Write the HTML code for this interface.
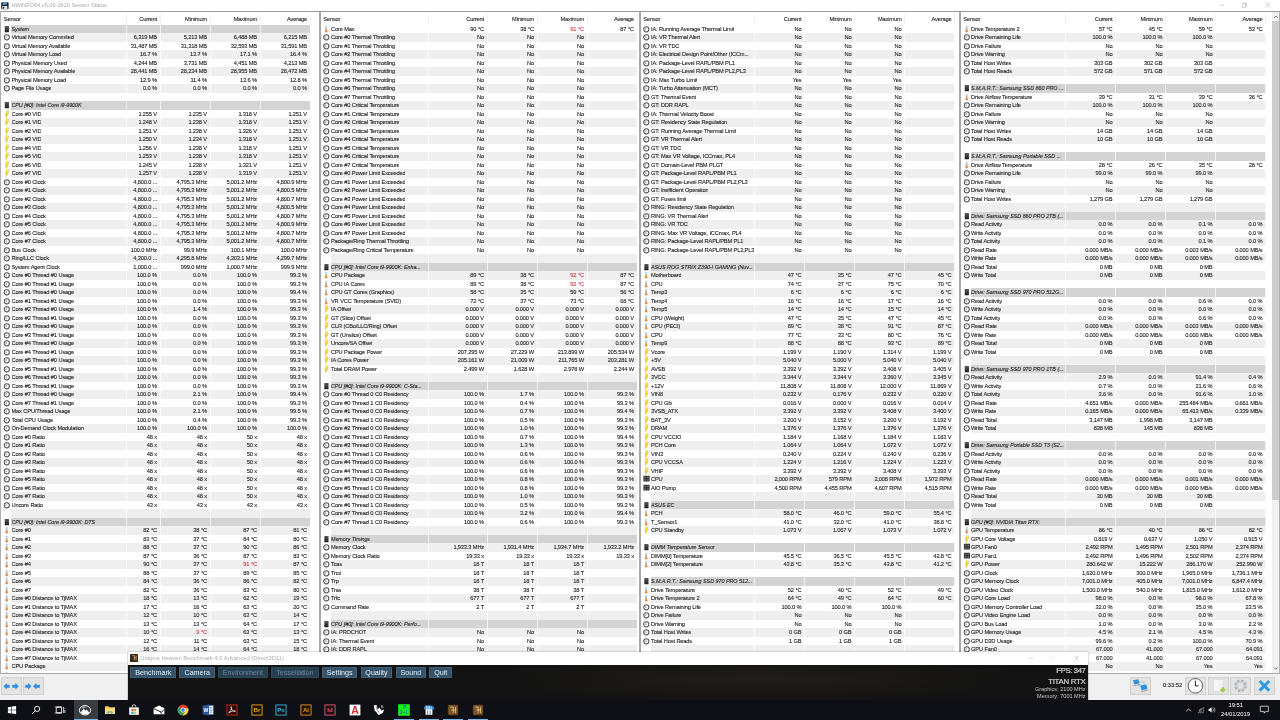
<!DOCTYPE html><html><head><meta charset="utf-8"><title>HWiNFO64 v6.00-3620 Sensor Status</title><style>
html,body{margin:0;padding:0}
body{width:1280px;height:720px;overflow:hidden;position:relative;background:#fff;font-family:"Liberation Sans",sans-serif;font-size:5.7px;color:#222}
div,span,svg{position:absolute}
.p{will-change:transform;letter-spacing:-.17px;word-spacing:.2px;-webkit-text-stroke:.1px;top:12px;height:661px;overflow:hidden;background:#fff}
.hd{top:0;left:0;height:12.5px;line-height:14.3px;width:100%}
.hd span{top:0}
.rows{top:12.5px;left:11px}
.r{position:relative;display:block;height:8.5px;line-height:8.5px;white-space:nowrap}
.e{background:#efefef}
.h{background:#d4d4d4;font-style:italic;letter-spacing:-.08px;font-size:5.42px}
.l{left:.5px;top:0;overflow:hidden}
.v{top:0;text-align:right}
.a{right:153px}.b{right:103px}.c{right:53px}.d{right:3px}
.x{color:#d63a45}
.q0 use,.q3 use{transform:translateX(.45px)}
.i{left:-7.9px;top:0;width:7px;height:8.5px}
.s{top:12.5px;width:1px;height:700px;background:rgba(255,255,255,.7)}
.sh{top:1px;width:1px;height:11px;background:#f1f1f1}
.vd{top:11px;width:2px;height:662px;background:#a8a8a8}
.q0 .l{max-width:113.8px}
.q1 .l{max-width:96.4px}
.q2 .l{max-width:102.8px}
.q3 .l{max-width:93.8px}
.tb,.bar,.hv,.tk{will-change:transform}
.tb{left:0;top:0;width:1280px;height:11px;background:#fff}
.tt{left:11.5px;top:0;line-height:11.5px;font-size:5.63px;color:#aaa;white-space:nowrap;-webkit-text-stroke:0}
.ln{background:#9c9c9c}
.bar{left:0;top:674px;width:1280px;height:26px;background:#f0f0f0}
.btn{top:3px;height:17.5px;background:#e3e3e3;border:.5px solid #d0d0d0;box-sizing:border-box}
.hv{left:127.5px;top:651.5px;width:960px;height:48.5px;background:#131313;overflow:hidden;box-shadow:0 0 2px rgba(0,0,0,.35)}
.hvt{left:0;top:0;width:100%;height:12.5px;background:#fff}
.hvt span{left:12.2px;top:0;line-height:12.5px;font-size:5.84px;color:#adadad;white-space:nowrap}
.hb{top:14.7px;height:11px;line-height:12.2px;font-size:7.15px;color:#e8eef2;text-align:center;background:#34536a;border-radius:1px;box-shadow:inset 0 0 0 .6px #4a6c84;white-space:nowrap}
.hb.dim{color:#6f8798;background:#263f50;box-shadow:inset 0 0 0 .6px #33505f}
.fps{right:2.5px;color:#d8d8d8;white-space:nowrap;text-align:right}
.tk{left:0;top:700px;width:1280px;height:20px;background:#0e1015}
.ti{top:3.5px;width:12px;height:12px}
.ul{top:19px;height:1px;width:20px;background:#76b9ed}
.tx{color:#fff;white-space:nowrap;font-size:5.8px}
.b2{-webkit-text-stroke:.2px #d8d8d8}
.x{-webkit-text-stroke-color:#d63a45}
</style></head><body>
<svg width="0" height="0" style="position:absolute"><defs>
<linearGradient id="gh" x1="0" y1="0" x2="0" y2="1"><stop offset="0" stop-color="#5a5a5a"/><stop offset="1" stop-color="#1e1e1e"/></linearGradient>
<symbol id="C" viewBox="0 0 7 8.5"><circle cx="3.3" cy="4.3" r="2.6" fill="#fff" stroke="#505050" stroke-width="1.05"/><path d="M1.9 4.1H3.6" stroke="#505050" stroke-width=".7"/></symbol>
<symbol id="H" viewBox="0 0 7 8.5"><rect x="1.3" y="1" width="4.2" height="6.3" rx=".4" fill="url(#gh)"/></symbol>
<linearGradient id="gb" x1="0" y1="0" x2="0" y2="1"><stop offset="0" stop-color="#fdf08a"/><stop offset=".55" stop-color="#fad21e"/><stop offset="1" stop-color="#f0961e"/></linearGradient><symbol id="B" viewBox="0 0 7 8.5"><path d="M2.7.7H5.1Q5.9 3.4 2.3 7.7Q3.6 4.6 1.9 4.4Z" fill="url(#gb)" stroke="#d9a028" stroke-width=".35"/></symbol>
<symbol id="T" viewBox="0 0 7 8.5"><rect x="2.3" y=".7" width="1.8" height="4" rx=".9" fill="#a9d2f2"/><rect x="2.3" y="3.6" width="1.8" height="2" fill="#f09a4a"/><circle cx="3.2" cy="6.35" r="1.25" fill="#ee8a34"/></symbol>
<symbol id="F" viewBox="0 0 7 8.5"><rect x=".4" y=".8" width="6.2" height="5.8" rx=".3" fill="#2e2e2e"/><path d="M1.3 1.6H3V3.2H1.3ZM4 1.6H5.7V3.2H4ZM1.3 4.2H3V5.8H1.3ZM4 4.2H5.7V5.8H4Z" fill="#6e6e6e"/></symbol>
</defs></svg>
<div class="p" style="left:0px;width:321px">
<div class="hd">
<span style="left:3.8px">Sensor</span>
<span style="right:164.0px">Current</span>
<span style="right:114.0px">Minimum</span>
<span style="right:64.0px">Maximum</span>
<span style="right:14.0px">Average</span>
</div>
<div class="rows q0" style="left:11.0px;width:299.0px">
<div class="r h"><svg class="i"><use href="#H"/></svg><span class="l">System</span></div>
<div class="r e"><svg class="i"><use href="#C"/></svg><span class="l">Virtual Memory Commited</span><span class="v a">6,319 MB</span><span class="v b">5,213 MB</span><span class="v c">6,488 MB</span><span class="v d">6,215 MB</span></div>
<div class="r"><svg class="i"><use href="#C"/></svg><span class="l">Virtual Memory Available</span><span class="v a">31,487 MB</span><span class="v b">31,318 MB</span><span class="v c">32,593 MB</span><span class="v d">31,591 MB</span></div>
<div class="r e"><svg class="i"><use href="#C"/></svg><span class="l">Virtual Memory Load</span><span class="v a">16.7 %</span><span class="v b">13.7 %</span><span class="v c">17.1 %</span><span class="v d">16.4 %</span></div>
<div class="r"><svg class="i"><use href="#C"/></svg><span class="l">Physical Memory Used</span><span class="v a">4,244 MB</span><span class="v b">3,731 MB</span><span class="v c">4,451 MB</span><span class="v d">4,213 MB</span></div>
<div class="r e"><svg class="i"><use href="#C"/></svg><span class="l">Physical Memory Available</span><span class="v a">28,441 MB</span><span class="v b">28,234 MB</span><span class="v c">28,955 MB</span><span class="v d">28,472 MB</span></div>
<div class="r"><svg class="i"><use href="#C"/></svg><span class="l">Physical Memory Load</span><span class="v a">12.9 %</span><span class="v b">11.4 %</span><span class="v c">13.6 %</span><span class="v d">12.8 %</span></div>
<div class="r e"><svg class="i"><use href="#C"/></svg><span class="l">Page File Usage</span><span class="v a">0.0 %</span><span class="v b">0.0 %</span><span class="v c">0.0 %</span><span class="v d">0.0 %</span></div>
<div class="r"></div>
<div class="r h"><svg class="i"><use href="#H"/></svg><span class="l">CPU [#0]: Intel Core i9-9900K</span></div>
<div class="r"><svg class="i"><use href="#B"/></svg><span class="l">Core #0 VID</span><span class="v a">1.255 V</span><span class="v b">1.235 V</span><span class="v c">1.318 V</span><span class="v d">1.251 V</span></div>
<div class="r e"><svg class="i"><use href="#B"/></svg><span class="l">Core #1 VID</span><span class="v a">1.248 V</span><span class="v b">1.238 V</span><span class="v c">1.318 V</span><span class="v d">1.251 V</span></div>
<div class="r"><svg class="i"><use href="#B"/></svg><span class="l">Core #2 VID</span><span class="v a">1.251 V</span><span class="v b">1.238 V</span><span class="v c">1.326 V</span><span class="v d">1.251 V</span></div>
<div class="r e"><svg class="i"><use href="#B"/></svg><span class="l">Core #3 VID</span><span class="v a">1.250 V</span><span class="v b">1.234 V</span><span class="v c">1.318 V</span><span class="v d">1.251 V</span></div>
<div class="r"><svg class="i"><use href="#B"/></svg><span class="l">Core #4 VID</span><span class="v a">1.256 V</span><span class="v b">1.238 V</span><span class="v c">1.318 V</span><span class="v d">1.251 V</span></div>
<div class="r e"><svg class="i"><use href="#B"/></svg><span class="l">Core #5 VID</span><span class="v a">1.253 V</span><span class="v b">1.238 V</span><span class="v c">1.318 V</span><span class="v d">1.251 V</span></div>
<div class="r"><svg class="i"><use href="#B"/></svg><span class="l">Core #6 VID</span><span class="v a">1.245 V</span><span class="v b">1.238 V</span><span class="v c">1.321 V</span><span class="v d">1.251 V</span></div>
<div class="r e"><svg class="i"><use href="#B"/></svg><span class="l">Core #7 VID</span><span class="v a">1.257 V</span><span class="v b">1.238 V</span><span class="v c">1.319 V</span><span class="v d">1.251 V</span></div>
<div class="r"><svg class="i"><use href="#C"/></svg><span class="l">Core #0 Clock</span><span class="v a">4,800.0 ...</span><span class="v b">4,795.3 MHz</span><span class="v c">5,001.2 MHz</span><span class="v d">4,800.9 MHz</span></div>
<div class="r e"><svg class="i"><use href="#C"/></svg><span class="l">Core #1 Clock</span><span class="v a">4,800.0 ...</span><span class="v b">4,795.3 MHz</span><span class="v c">5,001.2 MHz</span><span class="v d">4,800.5 MHz</span></div>
<div class="r"><svg class="i"><use href="#C"/></svg><span class="l">Core #2 Clock</span><span class="v a">4,800.0 ...</span><span class="v b">4,795.3 MHz</span><span class="v c">5,001.2 MHz</span><span class="v d">4,800.7 MHz</span></div>
<div class="r e"><svg class="i"><use href="#C"/></svg><span class="l">Core #3 Clock</span><span class="v a">4,800.0 ...</span><span class="v b">4,795.3 MHz</span><span class="v c">5,001.2 MHz</span><span class="v d">4,800.5 MHz</span></div>
<div class="r"><svg class="i"><use href="#C"/></svg><span class="l">Core #4 Clock</span><span class="v a">4,800.0 ...</span><span class="v b">4,795.3 MHz</span><span class="v c">5,001.2 MHz</span><span class="v d">4,800.7 MHz</span></div>
<div class="r e"><svg class="i"><use href="#C"/></svg><span class="l">Core #5 Clock</span><span class="v a">4,800.0 ...</span><span class="v b">4,795.3 MHz</span><span class="v c">5,001.2 MHz</span><span class="v d">4,800.9 MHz</span></div>
<div class="r"><svg class="i"><use href="#C"/></svg><span class="l">Core #6 Clock</span><span class="v a">4,800.0 ...</span><span class="v b">4,795.3 MHz</span><span class="v c">5,001.2 MHz</span><span class="v d">4,800.7 MHz</span></div>
<div class="r e"><svg class="i"><use href="#C"/></svg><span class="l">Core #7 Clock</span><span class="v a">4,800.0 ...</span><span class="v b">4,795.3 MHz</span><span class="v c">5,001.2 MHz</span><span class="v d">4,800.7 MHz</span></div>
<div class="r"><svg class="i"><use href="#C"/></svg><span class="l">Bus Clock</span><span class="v a">100.0 MHz</span><span class="v b">99.9 MHz</span><span class="v c">100.1 MHz</span><span class="v d">100.0 MHz</span></div>
<div class="r e"><svg class="i"><use href="#C"/></svg><span class="l">Ring/LLC Clock</span><span class="v a">4,300.0 ...</span><span class="v b">4,295.8 MHz</span><span class="v c">4,303.1 MHz</span><span class="v d">4,299.7 MHz</span></div>
<div class="r"><svg class="i"><use href="#C"/></svg><span class="l">System Agent Clock</span><span class="v a">1,000.0 ...</span><span class="v b">999.0 MHz</span><span class="v c">1,000.7 MHz</span><span class="v d">999.9 MHz</span></div>
<div class="r e"><svg class="i"><use href="#C"/></svg><span class="l">Core #0 Thread #0 Usage</span><span class="v a">100.0 %</span><span class="v b">0.0 %</span><span class="v c">100.0 %</span><span class="v d">99.3 %</span></div>
<div class="r"><svg class="i"><use href="#C"/></svg><span class="l">Core #0 Thread #1 Usage</span><span class="v a">100.0 %</span><span class="v b">0.0 %</span><span class="v c">100.0 %</span><span class="v d">99.3 %</span></div>
<div class="r e"><svg class="i"><use href="#C"/></svg><span class="l">Core #1 Thread #0 Usage</span><span class="v a">100.0 %</span><span class="v b">0.0 %</span><span class="v c">100.0 %</span><span class="v d">99.4 %</span></div>
<div class="r"><svg class="i"><use href="#C"/></svg><span class="l">Core #1 Thread #1 Usage</span><span class="v a">100.0 %</span><span class="v b">0.0 %</span><span class="v c">100.0 %</span><span class="v d">99.3 %</span></div>
<div class="r e"><svg class="i"><use href="#C"/></svg><span class="l">Core #2 Thread #0 Usage</span><span class="v a">100.0 %</span><span class="v b">1.4 %</span><span class="v c">100.0 %</span><span class="v d">99.3 %</span></div>
<div class="r"><svg class="i"><use href="#C"/></svg><span class="l">Core #2 Thread #1 Usage</span><span class="v a">100.0 %</span><span class="v b">0.0 %</span><span class="v c">100.0 %</span><span class="v d">99.3 %</span></div>
<div class="r e"><svg class="i"><use href="#C"/></svg><span class="l">Core #3 Thread #0 Usage</span><span class="v a">100.0 %</span><span class="v b">0.0 %</span><span class="v c">100.0 %</span><span class="v d">99.3 %</span></div>
<div class="r"><svg class="i"><use href="#C"/></svg><span class="l">Core #3 Thread #1 Usage</span><span class="v a">100.0 %</span><span class="v b">0.0 %</span><span class="v c">100.0 %</span><span class="v d">99.3 %</span></div>
<div class="r e"><svg class="i"><use href="#C"/></svg><span class="l">Core #4 Thread #0 Usage</span><span class="v a">100.0 %</span><span class="v b">0.0 %</span><span class="v c">100.0 %</span><span class="v d">99.3 %</span></div>
<div class="r"><svg class="i"><use href="#C"/></svg><span class="l">Core #4 Thread #1 Usage</span><span class="v a">100.0 %</span><span class="v b">0.0 %</span><span class="v c">100.0 %</span><span class="v d">99.3 %</span></div>
<div class="r e"><svg class="i"><use href="#C"/></svg><span class="l">Core #5 Thread #0 Usage</span><span class="v a">100.0 %</span><span class="v b">0.0 %</span><span class="v c">100.0 %</span><span class="v d">99.3 %</span></div>
<div class="r"><svg class="i"><use href="#C"/></svg><span class="l">Core #5 Thread #1 Usage</span><span class="v a">100.0 %</span><span class="v b">0.0 %</span><span class="v c">100.0 %</span><span class="v d">99.3 %</span></div>
<div class="r e"><svg class="i"><use href="#C"/></svg><span class="l">Core #6 Thread #0 Usage</span><span class="v a">100.0 %</span><span class="v b">0.0 %</span><span class="v c">100.0 %</span><span class="v d">99.3 %</span></div>
<div class="r"><svg class="i"><use href="#C"/></svg><span class="l">Core #6 Thread #1 Usage</span><span class="v a">100.0 %</span><span class="v b">0.0 %</span><span class="v c">100.0 %</span><span class="v d">99.3 %</span></div>
<div class="r e"><svg class="i"><use href="#C"/></svg><span class="l">Core #7 Thread #0 Usage</span><span class="v a">100.0 %</span><span class="v b">2.1 %</span><span class="v c">100.0 %</span><span class="v d">99.4 %</span></div>
<div class="r"><svg class="i"><use href="#C"/></svg><span class="l">Core #7 Thread #1 Usage</span><span class="v a">100.0 %</span><span class="v b">0.0 %</span><span class="v c">100.0 %</span><span class="v d">99.3 %</span></div>
<div class="r e"><svg class="i"><use href="#C"/></svg><span class="l">Max CPU/Thread Usage</span><span class="v a">100.0 %</span><span class="v b">2.1 %</span><span class="v c">100.0 %</span><span class="v d">99.5 %</span></div>
<div class="r"><svg class="i"><use href="#C"/></svg><span class="l">Total CPU Usage</span><span class="v a">100.0 %</span><span class="v b">0.4 %</span><span class="v c">100.0 %</span><span class="v d">99.3 %</span></div>
<div class="r e"><svg class="i"><use href="#C"/></svg><span class="l">On-Demand Clock Modulation</span><span class="v a">100.0 %</span><span class="v b">100.0 %</span><span class="v c">100.0 %</span><span class="v d">100.0 %</span></div>
<div class="r"><svg class="i"><use href="#C"/></svg><span class="l">Core #0 Ratio</span><span class="v a">48 x</span><span class="v b">48 x</span><span class="v c">50 x</span><span class="v d">48 x</span></div>
<div class="r e"><svg class="i"><use href="#C"/></svg><span class="l">Core #1 Ratio</span><span class="v a">48 x</span><span class="v b">48 x</span><span class="v c">50 x</span><span class="v d">48 x</span></div>
<div class="r"><svg class="i"><use href="#C"/></svg><span class="l">Core #2 Ratio</span><span class="v a">48 x</span><span class="v b">48 x</span><span class="v c">50 x</span><span class="v d">48 x</span></div>
<div class="r e"><svg class="i"><use href="#C"/></svg><span class="l">Core #3 Ratio</span><span class="v a">48 x</span><span class="v b">48 x</span><span class="v c">50 x</span><span class="v d">48 x</span></div>
<div class="r"><svg class="i"><use href="#C"/></svg><span class="l">Core #4 Ratio</span><span class="v a">48 x</span><span class="v b">48 x</span><span class="v c">50 x</span><span class="v d">48 x</span></div>
<div class="r e"><svg class="i"><use href="#C"/></svg><span class="l">Core #5 Ratio</span><span class="v a">48 x</span><span class="v b">48 x</span><span class="v c">50 x</span><span class="v d">48 x</span></div>
<div class="r"><svg class="i"><use href="#C"/></svg><span class="l">Core #6 Ratio</span><span class="v a">48 x</span><span class="v b">48 x</span><span class="v c">50 x</span><span class="v d">48 x</span></div>
<div class="r e"><svg class="i"><use href="#C"/></svg><span class="l">Core #7 Ratio</span><span class="v a">48 x</span><span class="v b">48 x</span><span class="v c">50 x</span><span class="v d">48 x</span></div>
<div class="r"><svg class="i"><use href="#C"/></svg><span class="l">Uncore Ratio</span><span class="v a">43 x</span><span class="v b">43 x</span><span class="v c">43 x</span><span class="v d">43 x</span></div>
<div class="r e"></div>
<div class="r h"><svg class="i"><use href="#H"/></svg><span class="l">CPU [#0]: Intel Core i9-9900K: DTS</span></div>
<div class="r e"><svg class="i"><use href="#T"/></svg><span class="l">Core #0</span><span class="v a">82 °C</span><span class="v b">38 °C</span><span class="v c">87 °C</span><span class="v d">81 °C</span></div>
<div class="r"><svg class="i"><use href="#T"/></svg><span class="l">Core #1</span><span class="v a">83 °C</span><span class="v b">37 °C</span><span class="v c">84 °C</span><span class="v d">80 °C</span></div>
<div class="r e"><svg class="i"><use href="#T"/></svg><span class="l">Core #2</span><span class="v a">88 °C</span><span class="v b">37 °C</span><span class="v c">90 °C</span><span class="v d">86 °C</span></div>
<div class="r"><svg class="i"><use href="#T"/></svg><span class="l">Core #3</span><span class="v a">87 °C</span><span class="v b">36 °C</span><span class="v c">87 °C</span><span class="v d">83 °C</span></div>
<div class="r e"><svg class="i"><use href="#T"/></svg><span class="l">Core #4</span><span class="v a">90 °C</span><span class="v b">37 °C</span><span class="v c x">91 °C</span><span class="v d">87 °C</span></div>
<div class="r"><svg class="i"><use href="#T"/></svg><span class="l">Core #5</span><span class="v a">88 °C</span><span class="v b">37 °C</span><span class="v c">89 °C</span><span class="v d">85 °C</span></div>
<div class="r e"><svg class="i"><use href="#T"/></svg><span class="l">Core #6</span><span class="v a">84 °C</span><span class="v b">36 °C</span><span class="v c">86 °C</span><span class="v d">82 °C</span></div>
<div class="r"><svg class="i"><use href="#T"/></svg><span class="l">Core #7</span><span class="v a">82 °C</span><span class="v b">36 °C</span><span class="v c">83 °C</span><span class="v d">80 °C</span></div>
<div class="r e"><svg class="i"><use href="#T"/></svg><span class="l">Core #0 Distance to TjMAX</span><span class="v a">18 °C</span><span class="v b">13 °C</span><span class="v c">62 °C</span><span class="v d">19 °C</span></div>
<div class="r"><svg class="i"><use href="#T"/></svg><span class="l">Core #1 Distance to TjMAX</span><span class="v a">17 °C</span><span class="v b">16 °C</span><span class="v c">63 °C</span><span class="v d">20 °C</span></div>
<div class="r e"><svg class="i"><use href="#T"/></svg><span class="l">Core #2 Distance to TjMAX</span><span class="v a">12 °C</span><span class="v b">10 °C</span><span class="v c">63 °C</span><span class="v d">14 °C</span></div>
<div class="r"><svg class="i"><use href="#T"/></svg><span class="l">Core #3 Distance to TjMAX</span><span class="v a">13 °C</span><span class="v b">13 °C</span><span class="v c">64 °C</span><span class="v d">17 °C</span></div>
<div class="r e"><svg class="i"><use href="#T"/></svg><span class="l">Core #4 Distance to TjMAX</span><span class="v a">10 °C</span><span class="v b x">9 °C</span><span class="v c">63 °C</span><span class="v d">13 °C</span></div>
<div class="r"><svg class="i"><use href="#T"/></svg><span class="l">Core #5 Distance to TjMAX</span><span class="v a">12 °C</span><span class="v b">11 °C</span><span class="v c">63 °C</span><span class="v d">15 °C</span></div>
<div class="r e"><svg class="i"><use href="#T"/></svg><span class="l">Core #6 Distance to TjMAX</span><span class="v a">16 °C</span><span class="v b">14 °C</span><span class="v c">64 °C</span><span class="v d">18 °C</span></div>
<div class="r"><svg class="i"><use href="#T"/></svg><span class="l">Core #7 Distance to TjMAX</span><span class="v a">15 °C</span><span class="v b">13 °C</span><span class="v c">63 °C</span><span class="v d">17 °C</span></div>
<div class="r e"><svg class="i"><use href="#T"/></svg><span class="l">CPU Package</span><span class="v a">89 °C</span><span class="v b">38 °C</span><span class="v c x">92 °C</span><span class="v d">87 °C</span></div>
<div class="r"><svg class="i"><use href="#T"/></svg><span class="l">Core Max</span><span class="v a">90 °C</span><span class="v b">38 °C</span><span class="v c x">91 °C</span><span class="v d">87 °C</span></div>
</div>
<div class="s" style="left:125.5px"></div><div class="sh" style="left:125.5px"></div>
<div class="s" style="left:159.5px"></div><div class="sh" style="left:159.5px"></div>
<div class="s" style="left:209.5px"></div><div class="sh" style="left:209.5px"></div>
<div class="s" style="left:259.5px"></div><div class="sh" style="left:259.5px"></div>
<div class="s" style="left:309.5px"></div><div class="sh" style="left:309.5px"></div>
</div>
<div class="p" style="left:319px;width:321px">
<div class="hd">
<span style="left:4.3px">Sensor</span>
<span style="right:156.0px">Current</span>
<span style="right:106.0px">Minimum</span>
<span style="right:56.0px">Maximum</span>
<span style="right:6.0px">Average</span>
</div>
<div class="rows q1" style="left:11.5px;width:306.5px">
<div class="r"><svg class="i"><use href="#T"/></svg><span class="l">Core Max</span><span class="v a">90 °C</span><span class="v b">38 °C</span><span class="v c x">91 °C</span><span class="v d">87 °C</span></div>
<div class="r e"><svg class="i"><use href="#C"/></svg><span class="l">Core #0 Thermal Throttling</span><span class="v a">No</span><span class="v b">No</span><span class="v c">No</span></div>
<div class="r"><svg class="i"><use href="#C"/></svg><span class="l">Core #1 Thermal Throttling</span><span class="v a">No</span><span class="v b">No</span><span class="v c">No</span></div>
<div class="r e"><svg class="i"><use href="#C"/></svg><span class="l">Core #2 Thermal Throttling</span><span class="v a">No</span><span class="v b">No</span><span class="v c">No</span></div>
<div class="r"><svg class="i"><use href="#C"/></svg><span class="l">Core #3 Thermal Throttling</span><span class="v a">No</span><span class="v b">No</span><span class="v c">No</span></div>
<div class="r e"><svg class="i"><use href="#C"/></svg><span class="l">Core #4 Thermal Throttling</span><span class="v a">No</span><span class="v b">No</span><span class="v c">No</span></div>
<div class="r"><svg class="i"><use href="#C"/></svg><span class="l">Core #5 Thermal Throttling</span><span class="v a">No</span><span class="v b">No</span><span class="v c">No</span></div>
<div class="r e"><svg class="i"><use href="#C"/></svg><span class="l">Core #6 Thermal Throttling</span><span class="v a">No</span><span class="v b">No</span><span class="v c">No</span></div>
<div class="r"><svg class="i"><use href="#C"/></svg><span class="l">Core #7 Thermal Throttling</span><span class="v a">No</span><span class="v b">No</span><span class="v c">No</span></div>
<div class="r e"><svg class="i"><use href="#C"/></svg><span class="l">Core #0 Critical Temperature</span><span class="v a">No</span><span class="v b">No</span><span class="v c">No</span></div>
<div class="r"><svg class="i"><use href="#C"/></svg><span class="l">Core #1 Critical Temperature</span><span class="v a">No</span><span class="v b">No</span><span class="v c">No</span></div>
<div class="r e"><svg class="i"><use href="#C"/></svg><span class="l">Core #2 Critical Temperature</span><span class="v a">No</span><span class="v b">No</span><span class="v c">No</span></div>
<div class="r"><svg class="i"><use href="#C"/></svg><span class="l">Core #3 Critical Temperature</span><span class="v a">No</span><span class="v b">No</span><span class="v c">No</span></div>
<div class="r e"><svg class="i"><use href="#C"/></svg><span class="l">Core #4 Critical Temperature</span><span class="v a">No</span><span class="v b">No</span><span class="v c">No</span></div>
<div class="r"><svg class="i"><use href="#C"/></svg><span class="l">Core #5 Critical Temperature</span><span class="v a">No</span><span class="v b">No</span><span class="v c">No</span></div>
<div class="r e"><svg class="i"><use href="#C"/></svg><span class="l">Core #6 Critical Temperature</span><span class="v a">No</span><span class="v b">No</span><span class="v c">No</span></div>
<div class="r"><svg class="i"><use href="#C"/></svg><span class="l">Core #7 Critical Temperature</span><span class="v a">No</span><span class="v b">No</span><span class="v c">No</span></div>
<div class="r e"><svg class="i"><use href="#C"/></svg><span class="l">Core #0 Power Limit Exceeded</span><span class="v a">No</span><span class="v b">No</span><span class="v c">No</span></div>
<div class="r"><svg class="i"><use href="#C"/></svg><span class="l">Core #1 Power Limit Exceeded</span><span class="v a">No</span><span class="v b">No</span><span class="v c">No</span></div>
<div class="r e"><svg class="i"><use href="#C"/></svg><span class="l">Core #2 Power Limit Exceeded</span><span class="v a">No</span><span class="v b">No</span><span class="v c">No</span></div>
<div class="r"><svg class="i"><use href="#C"/></svg><span class="l">Core #3 Power Limit Exceeded</span><span class="v a">No</span><span class="v b">No</span><span class="v c">No</span></div>
<div class="r e"><svg class="i"><use href="#C"/></svg><span class="l">Core #4 Power Limit Exceeded</span><span class="v a">No</span><span class="v b">No</span><span class="v c">No</span></div>
<div class="r"><svg class="i"><use href="#C"/></svg><span class="l">Core #5 Power Limit Exceeded</span><span class="v a">No</span><span class="v b">No</span><span class="v c">No</span></div>
<div class="r e"><svg class="i"><use href="#C"/></svg><span class="l">Core #6 Power Limit Exceeded</span><span class="v a">No</span><span class="v b">No</span><span class="v c">No</span></div>
<div class="r"><svg class="i"><use href="#C"/></svg><span class="l">Core #7 Power Limit Exceeded</span><span class="v a">No</span><span class="v b">No</span><span class="v c">No</span></div>
<div class="r e"><svg class="i"><use href="#C"/></svg><span class="l">Package/Ring Thermal Throttling</span><span class="v a">No</span><span class="v b">No</span><span class="v c">No</span></div>
<div class="r"><svg class="i"><use href="#C"/></svg><span class="l">Package/Ring Critical Temperature</span><span class="v a">No</span><span class="v b">No</span><span class="v c">No</span></div>
<div class="r e"></div>
<div class="r h"><svg class="i"><use href="#H"/></svg><span class="l">CPU [#0]: Intel Core i9-9900K: Enha...</span></div>
<div class="r e"><svg class="i"><use href="#T"/></svg><span class="l">CPU Package</span><span class="v a">89 °C</span><span class="v b">38 °C</span><span class="v c x">92 °C</span><span class="v d">87 °C</span></div>
<div class="r"><svg class="i"><use href="#T"/></svg><span class="l">CPU IA Cores</span><span class="v a">89 °C</span><span class="v b">38 °C</span><span class="v c x">92 °C</span><span class="v d">87 °C</span></div>
<div class="r e"><svg class="i"><use href="#T"/></svg><span class="l">CPU GT Cores (Graphics)</span><span class="v a">58 °C</span><span class="v b">35 °C</span><span class="v c">59 °C</span><span class="v d">56 °C</span></div>
<div class="r"><svg class="i"><use href="#T"/></svg><span class="l">VR VCC Temperature (SVID)</span><span class="v a">72 °C</span><span class="v b">37 °C</span><span class="v c">73 °C</span><span class="v d">68 °C</span></div>
<div class="r e"><svg class="i"><use href="#B"/></svg><span class="l">IA Offset</span><span class="v a">0.000 V</span><span class="v b">0.000 V</span><span class="v c">0.000 V</span><span class="v d">0.000 V</span></div>
<div class="r"><svg class="i"><use href="#B"/></svg><span class="l">GT (Slice) Offset</span><span class="v a">0.000 V</span><span class="v b">0.000 V</span><span class="v c">0.000 V</span><span class="v d">0.000 V</span></div>
<div class="r e"><svg class="i"><use href="#B"/></svg><span class="l">CLR (CBo/LLC/Ring) Offset</span><span class="v a">0.000 V</span><span class="v b">0.000 V</span><span class="v c">0.000 V</span><span class="v d">0.000 V</span></div>
<div class="r"><svg class="i"><use href="#B"/></svg><span class="l">GT (Unslice) Offset</span><span class="v a">0.000 V</span><span class="v b">0.000 V</span><span class="v c">0.000 V</span><span class="v d">0.000 V</span></div>
<div class="r e"><svg class="i"><use href="#B"/></svg><span class="l">Uncore/SA Offset</span><span class="v a">0.000 V</span><span class="v b">0.000 V</span><span class="v c">0.000 V</span><span class="v d">0.000 V</span></div>
<div class="r"><svg class="i"><use href="#B"/></svg><span class="l">CPU Package Power</span><span class="v a">207.295 W</span><span class="v b">27.229 W</span><span class="v c">213.899 W</span><span class="v d">205.534 W</span></div>
<div class="r e"><svg class="i"><use href="#B"/></svg><span class="l">IA Cores Power</span><span class="v a">205.161 W</span><span class="v b">21.009 W</span><span class="v c">211.765 W</span><span class="v d">203.281 W</span></div>
<div class="r"><svg class="i"><use href="#B"/></svg><span class="l">Total DRAM Power</span><span class="v a">2.499 W</span><span class="v b">1.628 W</span><span class="v c">2.978 W</span><span class="v d">2.244 W</span></div>
<div class="r e"></div>
<div class="r h"><svg class="i"><use href="#H"/></svg><span class="l">CPU [#0]: Intel Core i9-9900K: C-Sta...</span></div>
<div class="r e"><svg class="i"><use href="#C"/></svg><span class="l">Core #0 Thread 0 C0 Residency</span><span class="v a">100.0 %</span><span class="v b">1.7 %</span><span class="v c">100.0 %</span><span class="v d">99.3 %</span></div>
<div class="r"><svg class="i"><use href="#C"/></svg><span class="l">Core #0 Thread 1 C0 Residency</span><span class="v a">100.0 %</span><span class="v b">0.4 %</span><span class="v c">100.0 %</span><span class="v d">99.3 %</span></div>
<div class="r e"><svg class="i"><use href="#C"/></svg><span class="l">Core #1 Thread 0 C0 Residency</span><span class="v a">100.0 %</span><span class="v b">0.7 %</span><span class="v c">100.0 %</span><span class="v d">99.4 %</span></div>
<div class="r"><svg class="i"><use href="#C"/></svg><span class="l">Core #1 Thread 1 C0 Residency</span><span class="v a">100.0 %</span><span class="v b">0.5 %</span><span class="v c">100.0 %</span><span class="v d">99.3 %</span></div>
<div class="r e"><svg class="i"><use href="#C"/></svg><span class="l">Core #2 Thread 0 C0 Residency</span><span class="v a">100.0 %</span><span class="v b">1.0 %</span><span class="v c">100.0 %</span><span class="v d">99.3 %</span></div>
<div class="r"><svg class="i"><use href="#C"/></svg><span class="l">Core #2 Thread 1 C0 Residency</span><span class="v a">100.0 %</span><span class="v b">0.7 %</span><span class="v c">100.0 %</span><span class="v d">99.4 %</span></div>
<div class="r e"><svg class="i"><use href="#C"/></svg><span class="l">Core #3 Thread 0 C0 Residency</span><span class="v a">100.0 %</span><span class="v b">1.3 %</span><span class="v c">100.0 %</span><span class="v d">99.3 %</span></div>
<div class="r"><svg class="i"><use href="#C"/></svg><span class="l">Core #3 Thread 1 C0 Residency</span><span class="v a">100.0 %</span><span class="v b">0.6 %</span><span class="v c">100.0 %</span><span class="v d">99.3 %</span></div>
<div class="r e"><svg class="i"><use href="#C"/></svg><span class="l">Core #4 Thread 0 C0 Residency</span><span class="v a">100.0 %</span><span class="v b">0.6 %</span><span class="v c">100.0 %</span><span class="v d">99.3 %</span></div>
<div class="r"><svg class="i"><use href="#C"/></svg><span class="l">Core #4 Thread 1 C0 Residency</span><span class="v a">100.0 %</span><span class="v b">0.6 %</span><span class="v c">100.0 %</span><span class="v d">99.3 %</span></div>
<div class="r e"><svg class="i"><use href="#C"/></svg><span class="l">Core #5 Thread 0 C0 Residency</span><span class="v a">100.0 %</span><span class="v b">0.8 %</span><span class="v c">100.0 %</span><span class="v d">99.3 %</span></div>
<div class="r"><svg class="i"><use href="#C"/></svg><span class="l">Core #5 Thread 1 C0 Residency</span><span class="v a">100.0 %</span><span class="v b">0.8 %</span><span class="v c">100.0 %</span><span class="v d">99.3 %</span></div>
<div class="r e"><svg class="i"><use href="#C"/></svg><span class="l">Core #6 Thread 0 C0 Residency</span><span class="v a">100.0 %</span><span class="v b">1.0 %</span><span class="v c">100.0 %</span><span class="v d">99.3 %</span></div>
<div class="r"><svg class="i"><use href="#C"/></svg><span class="l">Core #6 Thread 1 C0 Residency</span><span class="v a">100.0 %</span><span class="v b">0.5 %</span><span class="v c">100.0 %</span><span class="v d">99.3 %</span></div>
<div class="r e"><svg class="i"><use href="#C"/></svg><span class="l">Core #7 Thread 0 C0 Residency</span><span class="v a">100.0 %</span><span class="v b">3.2 %</span><span class="v c">100.0 %</span><span class="v d">99.4 %</span></div>
<div class="r"><svg class="i"><use href="#C"/></svg><span class="l">Core #7 Thread 1 C0 Residency</span><span class="v a">100.0 %</span><span class="v b">0.6 %</span><span class="v c">100.0 %</span><span class="v d">99.3 %</span></div>
<div class="r e"></div>
<div class="r h"><svg class="i"><use href="#H"/></svg><span class="l">Memory Timings</span></div>
<div class="r e"><svg class="i"><use href="#C"/></svg><span class="l">Memory Clock</span><span class="v a">1,933.3 MHz</span><span class="v b">1,931.4 MHz</span><span class="v c">1,934.7 MHz</span><span class="v d">1,933.2 MHz</span></div>
<div class="r"><svg class="i"><use href="#C"/></svg><span class="l">Memory Clock Ratio</span><span class="v a">19.33 x</span><span class="v b">19.33 x</span><span class="v c">19.33 x</span><span class="v d">19.33 x</span></div>
<div class="r e"><svg class="i"><use href="#C"/></svg><span class="l">Tcas</span><span class="v a">18 T</span><span class="v b">18 T</span><span class="v c">18 T</span></div>
<div class="r"><svg class="i"><use href="#C"/></svg><span class="l">Trcd</span><span class="v a">18 T</span><span class="v b">18 T</span><span class="v c">18 T</span></div>
<div class="r e"><svg class="i"><use href="#C"/></svg><span class="l">Trp</span><span class="v a">18 T</span><span class="v b">18 T</span><span class="v c">18 T</span></div>
<div class="r"><svg class="i"><use href="#C"/></svg><span class="l">Tras</span><span class="v a">38 T</span><span class="v b">38 T</span><span class="v c">38 T</span></div>
<div class="r e"><svg class="i"><use href="#C"/></svg><span class="l">Trfc</span><span class="v a">677 T</span><span class="v b">677 T</span><span class="v c">677 T</span></div>
<div class="r"><svg class="i"><use href="#C"/></svg><span class="l">Command Rate</span><span class="v a">2 T</span><span class="v b">2 T</span><span class="v c">2 T</span></div>
<div class="r e"></div>
<div class="r h"><svg class="i"><use href="#H"/></svg><span class="l">CPU [#0]: Intel Core i9-9900K: Perfo...</span></div>
<div class="r e"><svg class="i"><use href="#C"/></svg><span class="l">IA: PROCHOT</span><span class="v a">No</span><span class="v b">No</span><span class="v c">No</span></div>
<div class="r"><svg class="i"><use href="#C"/></svg><span class="l">IA: Thermal Event</span><span class="v a">No</span><span class="v b">No</span><span class="v c">No</span></div>
<div class="r e"><svg class="i"><use href="#C"/></svg><span class="l">IA: DDR RAPL</span><span class="v a">No</span><span class="v b">No</span><span class="v c">No</span></div>
<div class="r"><svg class="i"><use href="#C"/></svg><span class="l">IA: Slow Slew Rate</span><span class="v a">No</span><span class="v b">No</span><span class="v c">No</span></div>
</div>
<div class="s" style="left:108.6px"></div><div class="sh" style="left:108.6px"></div>
<div class="s" style="left:167.5px"></div><div class="sh" style="left:167.5px"></div>
<div class="s" style="left:217.5px"></div><div class="sh" style="left:217.5px"></div>
<div class="s" style="left:267.5px"></div><div class="sh" style="left:267.5px"></div>
<div class="s" style="left:317.5px"></div><div class="sh" style="left:317.5px"></div>
</div>
<div class="p" style="left:639px;width:321px">
<div class="hd">
<span style="left:4.3px">Sensor</span>
<span style="right:158.5px">Current</span>
<span style="right:108.5px">Minimum</span>
<span style="right:58.5px">Maximum</span>
<span style="right:8.5px">Average</span>
</div>
<div class="rows q2" style="left:11.5px;width:304.0px">
<div class="r"><svg class="i"><use href="#C"/></svg><span class="l">IA: Running Average Thermal Limit</span><span class="v a">No</span><span class="v b">No</span><span class="v c">No</span></div>
<div class="r e"><svg class="i"><use href="#C"/></svg><span class="l">IA: VR Thermal Alert</span><span class="v a">No</span><span class="v b">No</span><span class="v c">No</span></div>
<div class="r"><svg class="i"><use href="#C"/></svg><span class="l">IA: VR TDC</span><span class="v a">No</span><span class="v b">No</span><span class="v c">No</span></div>
<div class="r e"><svg class="i"><use href="#C"/></svg><span class="l">IA: Electrical Design Point/Other (ICCm...</span><span class="v a">No</span><span class="v b">No</span><span class="v c">No</span></div>
<div class="r"><svg class="i"><use href="#C"/></svg><span class="l">IA: Package-Level RAPL/PBM PL1</span><span class="v a">No</span><span class="v b">No</span><span class="v c">No</span></div>
<div class="r e"><svg class="i"><use href="#C"/></svg><span class="l">IA: Package-Level RAPL/PBM PL2,PL3</span><span class="v a">No</span><span class="v b">No</span><span class="v c">No</span></div>
<div class="r"><svg class="i"><use href="#C"/></svg><span class="l">IA: Max Turbo Limit</span><span class="v a">Yes</span><span class="v b">Yes</span><span class="v c">Yes</span></div>
<div class="r e"><svg class="i"><use href="#C"/></svg><span class="l">IA: Turbo Attenuation (MCT)</span><span class="v a">No</span><span class="v b">No</span><span class="v c">No</span></div>
<div class="r"><svg class="i"><use href="#C"/></svg><span class="l">GT: Thermal Event</span><span class="v a">No</span><span class="v b">No</span><span class="v c">No</span></div>
<div class="r e"><svg class="i"><use href="#C"/></svg><span class="l">GT: DDR RAPL</span><span class="v a">No</span><span class="v b">No</span><span class="v c">No</span></div>
<div class="r"><svg class="i"><use href="#C"/></svg><span class="l">IA: Thermal Velocity Boost</span><span class="v a">No</span><span class="v b">No</span><span class="v c">No</span></div>
<div class="r e"><svg class="i"><use href="#C"/></svg><span class="l">GT: Residency State Regulation</span><span class="v a">No</span><span class="v b">No</span><span class="v c">No</span></div>
<div class="r"><svg class="i"><use href="#C"/></svg><span class="l">GT: Running Average Thermal Limit</span><span class="v a">No</span><span class="v b">No</span><span class="v c">No</span></div>
<div class="r e"><svg class="i"><use href="#C"/></svg><span class="l">GT: VR Thermal Alert</span><span class="v a">No</span><span class="v b">No</span><span class="v c">No</span></div>
<div class="r"><svg class="i"><use href="#C"/></svg><span class="l">GT: VR TDC</span><span class="v a">No</span><span class="v b">No</span><span class="v c">No</span></div>
<div class="r e"><svg class="i"><use href="#C"/></svg><span class="l">GT: Max VR Voltage, ICCmax, PL4</span><span class="v a">No</span><span class="v b">No</span><span class="v c">No</span></div>
<div class="r"><svg class="i"><use href="#C"/></svg><span class="l">GT: Domain-Level PBM PLGT</span><span class="v a">No</span><span class="v b">No</span><span class="v c">No</span></div>
<div class="r e"><svg class="i"><use href="#C"/></svg><span class="l">GT: Package-Level RAPL/PBM PL1</span><span class="v a">No</span><span class="v b">No</span><span class="v c">No</span></div>
<div class="r"><svg class="i"><use href="#C"/></svg><span class="l">GT: Package-Level RAPL/PBM PL2,PL3</span><span class="v a">No</span><span class="v b">No</span><span class="v c">No</span></div>
<div class="r e"><svg class="i"><use href="#C"/></svg><span class="l">GT: Inefficient Operation</span><span class="v a">No</span><span class="v b">No</span><span class="v c">No</span></div>
<div class="r"><svg class="i"><use href="#C"/></svg><span class="l">GT: Fuses limit</span><span class="v a">No</span><span class="v b">No</span><span class="v c">No</span></div>
<div class="r e"><svg class="i"><use href="#C"/></svg><span class="l">RING: Residency State Regulation</span><span class="v a">No</span><span class="v b">No</span><span class="v c">No</span></div>
<div class="r"><svg class="i"><use href="#C"/></svg><span class="l">RING: VR Thermal Alert</span><span class="v a">No</span><span class="v b">No</span><span class="v c">No</span></div>
<div class="r e"><svg class="i"><use href="#C"/></svg><span class="l">RING: VR TDC</span><span class="v a">No</span><span class="v b">No</span><span class="v c">No</span></div>
<div class="r"><svg class="i"><use href="#C"/></svg><span class="l">RING: Max VR Voltage, ICCmax, PL4</span><span class="v a">No</span><span class="v b">No</span><span class="v c">No</span></div>
<div class="r e"><svg class="i"><use href="#C"/></svg><span class="l">RING: Package-Level RAPL/PBM PL1</span><span class="v a">No</span><span class="v b">No</span><span class="v c">No</span></div>
<div class="r"><svg class="i"><use href="#C"/></svg><span class="l">RING: Package-Level RAPL/PBM PL2,PL3</span><span class="v a">No</span><span class="v b">No</span><span class="v c">No</span></div>
<div class="r e"></div>
<div class="r h"><svg class="i"><use href="#H"/></svg><span class="l">ASUS ROG STRIX Z390-I GAMING (Nuv...</span></div>
<div class="r e"><svg class="i"><use href="#T"/></svg><span class="l">Motherboard</span><span class="v a">47 °C</span><span class="v b">35 °C</span><span class="v c">47 °C</span><span class="v d">45 °C</span></div>
<div class="r"><svg class="i"><use href="#T"/></svg><span class="l">CPU</span><span class="v a">74 °C</span><span class="v b">37 °C</span><span class="v c">75 °C</span><span class="v d">70 °C</span></div>
<div class="r e"><svg class="i"><use href="#T"/></svg><span class="l">Temp3</span><span class="v a">6 °C</span><span class="v b">6 °C</span><span class="v c">6 °C</span><span class="v d">6 °C</span></div>
<div class="r"><svg class="i"><use href="#T"/></svg><span class="l">Temp4</span><span class="v a">16 °C</span><span class="v b">16 °C</span><span class="v c">17 °C</span><span class="v d">16 °C</span></div>
<div class="r e"><svg class="i"><use href="#T"/></svg><span class="l">Temp5</span><span class="v a">14 °C</span><span class="v b">14 °C</span><span class="v c">15 °C</span><span class="v d">14 °C</span></div>
<div class="r"><svg class="i"><use href="#T"/></svg><span class="l">CPU (Weight)</span><span class="v a">47 °C</span><span class="v b">35 °C</span><span class="v c">47 °C</span><span class="v d">45 °C</span></div>
<div class="r e"><svg class="i"><use href="#T"/></svg><span class="l">CPU (PECI)</span><span class="v a">89 °C</span><span class="v b">38 °C</span><span class="v c">91 °C</span><span class="v d">87 °C</span></div>
<div class="r"><svg class="i"><use href="#T"/></svg><span class="l">CPU</span><span class="v a">77 °C</span><span class="v b">33 °C</span><span class="v c">80 °C</span><span class="v d">76 °C</span></div>
<div class="r e"><svg class="i"><use href="#T"/></svg><span class="l">Temp9</span><span class="v a">88 °C</span><span class="v b">88 °C</span><span class="v c">93 °C</span><span class="v d">89 °C</span></div>
<div class="r"><svg class="i"><use href="#B"/></svg><span class="l">Vcore</span><span class="v a">1.199 V</span><span class="v b">1.190 V</span><span class="v c">1.314 V</span><span class="v d">1.199 V</span></div>
<div class="r e"><svg class="i"><use href="#B"/></svg><span class="l">+5V</span><span class="v a">5.040 V</span><span class="v b">5.000 V</span><span class="v c">5.040 V</span><span class="v d">5.040 V</span></div>
<div class="r"><svg class="i"><use href="#B"/></svg><span class="l">AVSB</span><span class="v a">3.392 V</span><span class="v b">3.392 V</span><span class="v c">3.408 V</span><span class="v d">3.405 V</span></div>
<div class="r e"><svg class="i"><use href="#B"/></svg><span class="l">3VCC</span><span class="v a">3.344 V</span><span class="v b">3.344 V</span><span class="v c">3.360 V</span><span class="v d">3.345 V</span></div>
<div class="r"><svg class="i"><use href="#B"/></svg><span class="l">+12V</span><span class="v a">11.808 V</span><span class="v b">11.808 V</span><span class="v c">12.000 V</span><span class="v d">11.869 V</span></div>
<div class="r e"><svg class="i"><use href="#B"/></svg><span class="l">VIN8</span><span class="v a">0.232 V</span><span class="v b">0.176 V</span><span class="v c">0.232 V</span><span class="v d">0.220 V</span></div>
<div class="r"><svg class="i"><use href="#B"/></svg><span class="l">CPU Gfx</span><span class="v a">0.016 V</span><span class="v b">0.000 V</span><span class="v c">0.016 V</span><span class="v d">0.014 V</span></div>
<div class="r e"><svg class="i"><use href="#B"/></svg><span class="l">3VSB_ATX</span><span class="v a">3.392 V</span><span class="v b">3.392 V</span><span class="v c">3.408 V</span><span class="v d">3.400 V</span></div>
<div class="r"><svg class="i"><use href="#B"/></svg><span class="l">BAT_3V</span><span class="v a">3.200 V</span><span class="v b">3.152 V</span><span class="v c">3.200 V</span><span class="v d">3.192 V</span></div>
<div class="r e"><svg class="i"><use href="#B"/></svg><span class="l">DRAM</span><span class="v a">1.376 V</span><span class="v b">1.376 V</span><span class="v c">1.376 V</span><span class="v d">1.376 V</span></div>
<div class="r"><svg class="i"><use href="#B"/></svg><span class="l">CPU VCCIO</span><span class="v a">1.184 V</span><span class="v b">1.168 V</span><span class="v c">1.184 V</span><span class="v d">1.183 V</span></div>
<div class="r e"><svg class="i"><use href="#B"/></svg><span class="l">PCH Core</span><span class="v a">1.064 V</span><span class="v b">1.064 V</span><span class="v c">1.072 V</span><span class="v d">1.072 V</span></div>
<div class="r"><svg class="i"><use href="#B"/></svg><span class="l">VIN3</span><span class="v a">0.240 V</span><span class="v b">0.224 V</span><span class="v c">0.240 V</span><span class="v d">0.236 V</span></div>
<div class="r e"><svg class="i"><use href="#B"/></svg><span class="l">CPU VCCSA</span><span class="v a">1.224 V</span><span class="v b">1.216 V</span><span class="v c">1.224 V</span><span class="v d">1.223 V</span></div>
<div class="r"><svg class="i"><use href="#B"/></svg><span class="l">VHIF</span><span class="v a">3.392 V</span><span class="v b">3.392 V</span><span class="v c">3.408 V</span><span class="v d">3.393 V</span></div>
<div class="r e"><svg class="i"><use href="#F"/></svg><span class="l">CPU</span><span class="v a">2,000 RPM</span><span class="v b">579 RPM</span><span class="v c">2,008 RPM</span><span class="v d">1,972 RPM</span></div>
<div class="r"><svg class="i"><use href="#F"/></svg><span class="l">AIO Pump</span><span class="v a">4,500 RPM</span><span class="v b">4,455 RPM</span><span class="v c">4,607 RPM</span><span class="v d">4,515 RPM</span></div>
<div class="r e"></div>
<div class="r h"><svg class="i"><use href="#H"/></svg><span class="l">ASUS EC</span></div>
<div class="r e"><svg class="i"><use href="#T"/></svg><span class="l">PCH</span><span class="v a">58.0 °C</span><span class="v b">46.0 °C</span><span class="v c">59.0 °C</span><span class="v d">55.4 °C</span></div>
<div class="r"><svg class="i"><use href="#T"/></svg><span class="l">T_Sensor1</span><span class="v a">41.0 °C</span><span class="v b">32.0 °C</span><span class="v c">41.0 °C</span><span class="v d">38.8 °C</span></div>
<div class="r e"><svg class="i"><use href="#B"/></svg><span class="l">CPU Standby</span><span class="v a">1.073 V</span><span class="v b">1.067 V</span><span class="v c">1.073 V</span><span class="v d">1.072 V</span></div>
<div class="r"></div>
<div class="r h"><svg class="i"><use href="#H"/></svg><span class="l">DIMM Temperature Sensor</span></div>
<div class="r"><svg class="i"><use href="#T"/></svg><span class="l">DIMM[0] Temperature</span><span class="v a">45.5 °C</span><span class="v b">36.5 °C</span><span class="v c">45.5 °C</span><span class="v d">42.8 °C</span></div>
<div class="r e"><svg class="i"><use href="#T"/></svg><span class="l">DIMM[2] Temperature</span><span class="v a">43.8 °C</span><span class="v b">35.3 °C</span><span class="v c">43.8 °C</span><span class="v d">41.2 °C</span></div>
<div class="r"></div>
<div class="r h"><svg class="i"><use href="#H"/></svg><span class="l">S.M.A.R.T.: Samsung SSD 970 PRO 512...</span></div>
<div class="r"><svg class="i"><use href="#T"/></svg><span class="l">Drive Temperature</span><span class="v a">52 °C</span><span class="v b">40 °C</span><span class="v c">52 °C</span><span class="v d">49 °C</span></div>
<div class="r e"><svg class="i"><use href="#T"/></svg><span class="l">Drive Temperature 2</span><span class="v a">64 °C</span><span class="v b">49 °C</span><span class="v c">64 °C</span><span class="v d">60 °C</span></div>
<div class="r"><svg class="i"><use href="#C"/></svg><span class="l">Drive Remaining Life</span><span class="v a">100.0 %</span><span class="v b">100.0 %</span><span class="v c">100.0 %</span></div>
<div class="r e"><svg class="i"><use href="#C"/></svg><span class="l">Drive Failure</span><span class="v a">No</span><span class="v b">No</span><span class="v c">No</span></div>
<div class="r"><svg class="i"><use href="#C"/></svg><span class="l">Drive Warning</span><span class="v a">No</span><span class="v b">No</span><span class="v c">No</span></div>
<div class="r e"><svg class="i"><use href="#C"/></svg><span class="l">Total Host Writes</span><span class="v a">0 GB</span><span class="v b">0 GB</span><span class="v c">0 GB</span></div>
<div class="r"><svg class="i"><use href="#C"/></svg><span class="l">Total Host Reads</span><span class="v a">1 GB</span><span class="v b">1 GB</span><span class="v c">1 GB</span></div>
<div class="r e"></div>
</div>
<div class="s" style="left:115.0px"></div><div class="sh" style="left:115.0px"></div>
<div class="s" style="left:165.0px"></div><div class="sh" style="left:165.0px"></div>
<div class="s" style="left:215.0px"></div><div class="sh" style="left:215.0px"></div>
<div class="s" style="left:265.0px"></div><div class="sh" style="left:265.0px"></div>
<div class="s" style="left:315.0px"></div><div class="sh" style="left:315.0px"></div>
</div>
<div class="p" style="left:959px;width:321px">
<div class="hd">
<span style="left:4.3px">Sensor</span>
<span style="right:167.5px">Current</span>
<span style="right:117.5px">Minimum</span>
<span style="right:67.5px">Maximum</span>
<span style="right:17.5px">Average</span>
</div>
<div class="rows q3" style="left:11.5px;width:295.0px">
<div class="r"><svg class="i"><use href="#T"/></svg><span class="l">Drive Temperature 2</span><span class="v a">57 °C</span><span class="v b">45 °C</span><span class="v c">59 °C</span><span class="v d">53 °C</span></div>
<div class="r e"><svg class="i"><use href="#C"/></svg><span class="l">Drive Remaining Life</span><span class="v a">100.0 %</span><span class="v b">100.0 %</span><span class="v c">100.0 %</span></div>
<div class="r"><svg class="i"><use href="#C"/></svg><span class="l">Drive Failure</span><span class="v a">No</span><span class="v b">No</span><span class="v c">No</span></div>
<div class="r e"><svg class="i"><use href="#C"/></svg><span class="l">Drive Warning</span><span class="v a">No</span><span class="v b">No</span><span class="v c">No</span></div>
<div class="r"><svg class="i"><use href="#C"/></svg><span class="l">Total Host Writes</span><span class="v a">303 GB</span><span class="v b">302 GB</span><span class="v c">303 GB</span></div>
<div class="r e"><svg class="i"><use href="#C"/></svg><span class="l">Total Host Reads</span><span class="v a">572 GB</span><span class="v b">571 GB</span><span class="v c">572 GB</span></div>
<div class="r"></div>
<div class="r h"><svg class="i"><use href="#H"/></svg><span class="l">S.M.A.R.T.: Samsung SSD 860 PRO ...</span></div>
<div class="r"><svg class="i"><use href="#T"/></svg><span class="l">Drive Airflow Temperature</span><span class="v a">39 °C</span><span class="v b">31 °C</span><span class="v c">39 °C</span><span class="v d">36 °C</span></div>
<div class="r e"><svg class="i"><use href="#C"/></svg><span class="l">Drive Remaining Life</span><span class="v a">100.0 %</span><span class="v b">100.0 %</span><span class="v c">100.0 %</span></div>
<div class="r"><svg class="i"><use href="#C"/></svg><span class="l">Drive Failure</span><span class="v a">No</span><span class="v b">No</span><span class="v c">No</span></div>
<div class="r e"><svg class="i"><use href="#C"/></svg><span class="l">Drive Warning</span><span class="v a">No</span><span class="v b">No</span><span class="v c">No</span></div>
<div class="r"><svg class="i"><use href="#C"/></svg><span class="l">Total Host Writes</span><span class="v a">14 GB</span><span class="v b">14 GB</span><span class="v c">14 GB</span></div>
<div class="r e"><svg class="i"><use href="#C"/></svg><span class="l">Total Host Reads</span><span class="v a">10 GB</span><span class="v b">10 GB</span><span class="v c">10 GB</span></div>
<div class="r"></div>
<div class="r h"><svg class="i"><use href="#H"/></svg><span class="l">S.M.A.R.T.: Samsung Portable SSD ...</span></div>
<div class="r"><svg class="i"><use href="#T"/></svg><span class="l">Drive Airflow Temperature</span><span class="v a">28 °C</span><span class="v b">26 °C</span><span class="v c">35 °C</span><span class="v d">28 °C</span></div>
<div class="r e"><svg class="i"><use href="#C"/></svg><span class="l">Drive Remaining Life</span><span class="v a">99.0 %</span><span class="v b">99.0 %</span><span class="v c">99.0 %</span></div>
<div class="r"><svg class="i"><use href="#C"/></svg><span class="l">Drive Failure</span><span class="v a">No</span><span class="v b">No</span><span class="v c">No</span></div>
<div class="r e"><svg class="i"><use href="#C"/></svg><span class="l">Drive Warning</span><span class="v a">No</span><span class="v b">No</span><span class="v c">No</span></div>
<div class="r"><svg class="i"><use href="#C"/></svg><span class="l">Total Host Writes</span><span class="v a">1,279 GB</span><span class="v b">1,279 GB</span><span class="v c">1,279 GB</span></div>
<div class="r e"></div>
<div class="r h"><svg class="i"><use href="#H"/></svg><span class="l">Drive: Samsung SSD 860 PRO 2TB (...</span></div>
<div class="r e"><svg class="i"><use href="#C"/></svg><span class="l">Read Activity</span><span class="v a">0.0 %</span><span class="v b">0.0 %</span><span class="v c">0.1 %</span><span class="v d">0.0 %</span></div>
<div class="r"><svg class="i"><use href="#C"/></svg><span class="l">Write Activity</span><span class="v a">0.0 %</span><span class="v b">0.0 %</span><span class="v c">0.0 %</span><span class="v d">0.0 %</span></div>
<div class="r e"><svg class="i"><use href="#C"/></svg><span class="l">Total Activity</span><span class="v a">0.0 %</span><span class="v b">0.0 %</span><span class="v c">0.1 %</span><span class="v d">0.0 %</span></div>
<div class="r"><svg class="i"><use href="#C"/></svg><span class="l">Read Rate</span><span class="v a">0.000 MB/s</span><span class="v b">0.000 MB/s</span><span class="v c">0.003 MB/s</span><span class="v d">0.000 MB/s</span></div>
<div class="r e"><svg class="i"><use href="#C"/></svg><span class="l">Write Rate</span><span class="v a">0.000 MB/s</span><span class="v b">0.000 MB/s</span><span class="v c">0.000 MB/s</span><span class="v d">0.000 MB/s</span></div>
<div class="r"><svg class="i"><use href="#C"/></svg><span class="l">Read Total</span><span class="v a">0 MB</span><span class="v b">0 MB</span><span class="v c">0 MB</span></div>
<div class="r e"><svg class="i"><use href="#C"/></svg><span class="l">Write Total</span><span class="v a">0 MB</span><span class="v b">0 MB</span><span class="v c">0 MB</span></div>
<div class="r"></div>
<div class="r h"><svg class="i"><use href="#H"/></svg><span class="l">Drive: Samsung SSD 970 PRO 512G...</span></div>
<div class="r"><svg class="i"><use href="#C"/></svg><span class="l">Read Activity</span><span class="v a">0.0 %</span><span class="v b">0.0 %</span><span class="v c">0.6 %</span><span class="v d">0.0 %</span></div>
<div class="r e"><svg class="i"><use href="#C"/></svg><span class="l">Write Activity</span><span class="v a">0.0 %</span><span class="v b">0.0 %</span><span class="v c">0.0 %</span><span class="v d">0.0 %</span></div>
<div class="r"><svg class="i"><use href="#C"/></svg><span class="l">Total Activity</span><span class="v a">0.0 %</span><span class="v b">0.0 %</span><span class="v c">0.6 %</span><span class="v d">0.0 %</span></div>
<div class="r e"><svg class="i"><use href="#C"/></svg><span class="l">Read Rate</span><span class="v a">0.000 MB/s</span><span class="v b">0.000 MB/s</span><span class="v c">0.003 MB/s</span><span class="v d">0.000 MB/s</span></div>
<div class="r"><svg class="i"><use href="#C"/></svg><span class="l">Write Rate</span><span class="v a">0.000 MB/s</span><span class="v b">0.000 MB/s</span><span class="v c">0.000 MB/s</span><span class="v d">0.000 MB/s</span></div>
<div class="r e"><svg class="i"><use href="#C"/></svg><span class="l">Read Total</span><span class="v a">0 MB</span><span class="v b">0 MB</span><span class="v c">0 MB</span></div>
<div class="r"><svg class="i"><use href="#C"/></svg><span class="l">Write Total</span><span class="v a">0 MB</span><span class="v b">0 MB</span><span class="v c">0 MB</span></div>
<div class="r e"></div>
<div class="r h"><svg class="i"><use href="#H"/></svg><span class="l">Drive: Samsung SSD 970 PRO 1TB (...</span></div>
<div class="r e"><svg class="i"><use href="#C"/></svg><span class="l">Read Activity</span><span class="v a">2.9 %</span><span class="v b">0.0 %</span><span class="v c">91.4 %</span><span class="v d">0.4 %</span></div>
<div class="r"><svg class="i"><use href="#C"/></svg><span class="l">Write Activity</span><span class="v a">0.7 %</span><span class="v b">0.0 %</span><span class="v c">21.6 %</span><span class="v d">0.6 %</span></div>
<div class="r e"><svg class="i"><use href="#C"/></svg><span class="l">Total Activity</span><span class="v a">3.6 %</span><span class="v b">0.0 %</span><span class="v c">91.6 %</span><span class="v d">1.0 %</span></div>
<div class="r"><svg class="i"><use href="#C"/></svg><span class="l">Read Rate</span><span class="v a">4.651 MB/s</span><span class="v b">0.000 MB/s</span><span class="v c">255.484 MB/s</span><span class="v d">0.661 MB/s</span></div>
<div class="r e"><svg class="i"><use href="#C"/></svg><span class="l">Write Rate</span><span class="v a">0.165 MB/s</span><span class="v b">0.000 MB/s</span><span class="v c">65.413 MB/s</span><span class="v d">0.339 MB/s</span></div>
<div class="r"><svg class="i"><use href="#C"/></svg><span class="l">Read Total</span><span class="v a">3,147 MB</span><span class="v b">1,998 MB</span><span class="v c">3,147 MB</span></div>
<div class="r e"><svg class="i"><use href="#C"/></svg><span class="l">Write Total</span><span class="v a">838 MB</span><span class="v b">145 MB</span><span class="v c">838 MB</span></div>
<div class="r"></div>
<div class="r h"><svg class="i"><use href="#H"/></svg><span class="l">Drive: Samsung Portable SSD T3 (S2...</span></div>
<div class="r"><svg class="i"><use href="#C"/></svg><span class="l">Read Activity</span><span class="v a">0.0 %</span><span class="v b">0.0 %</span><span class="v c">0.0 %</span><span class="v d">0.0 %</span></div>
<div class="r e"><svg class="i"><use href="#C"/></svg><span class="l">Write Activity</span><span class="v a">0.0 %</span><span class="v b">0.0 %</span><span class="v c">0.0 %</span><span class="v d">0.0 %</span></div>
<div class="r"><svg class="i"><use href="#C"/></svg><span class="l">Total Activity</span><span class="v a">0.0 %</span><span class="v b">0.0 %</span><span class="v c">0.0 %</span><span class="v d">0.0 %</span></div>
<div class="r e"><svg class="i"><use href="#C"/></svg><span class="l">Read Rate</span><span class="v a">0.000 MB/s</span><span class="v b">0.000 MB/s</span><span class="v c">0.001 MB/s</span><span class="v d">0.000 MB/s</span></div>
<div class="r"><svg class="i"><use href="#C"/></svg><span class="l">Write Rate</span><span class="v a">0.000 MB/s</span><span class="v b">0.000 MB/s</span><span class="v c">0.000 MB/s</span><span class="v d">0.000 MB/s</span></div>
<div class="r e"><svg class="i"><use href="#C"/></svg><span class="l">Read Total</span><span class="v a">30 MB</span><span class="v b">30 MB</span><span class="v c">30 MB</span></div>
<div class="r"><svg class="i"><use href="#C"/></svg><span class="l">Write Total</span><span class="v a">0 MB</span><span class="v b">0 MB</span><span class="v c">0 MB</span></div>
<div class="r e"></div>
<div class="r h"><svg class="i"><use href="#H"/></svg><span class="l">GPU [#0]: NVIDIA Titan RTX:</span></div>
<div class="r e"><svg class="i"><use href="#T"/></svg><span class="l">GPU Temperature</span><span class="v a">86 °C</span><span class="v b">40 °C</span><span class="v c">86 °C</span><span class="v d">82 °C</span></div>
<div class="r"><svg class="i"><use href="#B"/></svg><span class="l">GPU Core Voltage</span><span class="v a">0.819 V</span><span class="v b">0.637 V</span><span class="v c">1.050 V</span><span class="v d">0.915 V</span></div>
<div class="r e"><svg class="i"><use href="#F"/></svg><span class="l">GPU Fan0</span><span class="v a">2,492 RPM</span><span class="v b">1,495 RPM</span><span class="v c">2,501 RPM</span><span class="v d">2,374 RPM</span></div>
<div class="r"><svg class="i"><use href="#F"/></svg><span class="l">GPU Fan1</span><span class="v a">2,492 RPM</span><span class="v b">1,496 RPM</span><span class="v c">2,502 RPM</span><span class="v d">2,374 RPM</span></div>
<div class="r e"><svg class="i"><use href="#B"/></svg><span class="l">GPU Power</span><span class="v a">280.642 W</span><span class="v b">15.222 W</span><span class="v c">286.170 W</span><span class="v d">252.990 W</span></div>
<div class="r"><svg class="i"><use href="#C"/></svg><span class="l">GPU Clock</span><span class="v a">1,620.0 MHz</span><span class="v b">300.0 MHz</span><span class="v c">1,965.0 MHz</span><span class="v d">1,736.1 MHz</span></div>
<div class="r e"><svg class="i"><use href="#C"/></svg><span class="l">GPU Memory Clock</span><span class="v a">7,001.0 MHz</span><span class="v b">405.0 MHz</span><span class="v c">7,001.0 MHz</span><span class="v d">6,847.4 MHz</span></div>
<div class="r"><svg class="i"><use href="#C"/></svg><span class="l">GPU Video Clock</span><span class="v a">1,500.0 MHz</span><span class="v b">540.0 MHz</span><span class="v c">1,815.0 MHz</span><span class="v d">1,612.0 MHz</span></div>
<div class="r e"><svg class="i"><use href="#C"/></svg><span class="l">GPU Core Load</span><span class="v a">98.0 %</span><span class="v b">0.0 %</span><span class="v c">98.0 %</span><span class="v d">67.8 %</span></div>
<div class="r"><svg class="i"><use href="#C"/></svg><span class="l">GPU Memory Controller Load</span><span class="v a">32.0 %</span><span class="v b">0.0 %</span><span class="v c">35.0 %</span><span class="v d">23.5 %</span></div>
<div class="r e"><svg class="i"><use href="#C"/></svg><span class="l">GPU Video Engine Load</span><span class="v a">0.0 %</span><span class="v b">0.0 %</span><span class="v c">0.0 %</span><span class="v d">0.0 %</span></div>
<div class="r"><svg class="i"><use href="#C"/></svg><span class="l">GPU Bus Load</span><span class="v a">1.0 %</span><span class="v b">0.0 %</span><span class="v c">3.0 %</span><span class="v d">2.2 %</span></div>
<div class="r e"><svg class="i"><use href="#C"/></svg><span class="l">GPU Memory Usage</span><span class="v a">4.5 %</span><span class="v b">2.1 %</span><span class="v c">4.5 %</span><span class="v d">4.3 %</span></div>
<div class="r"><svg class="i"><use href="#C"/></svg><span class="l">GPU D3D Usage</span><span class="v a">99.6 %</span><span class="v b">0.2 %</span><span class="v c">100.0 %</span><span class="v d">70.9 %</span></div>
<div class="r e"><svg class="i"><use href="#C"/></svg><span class="l">GPU Fan0</span><span class="v a">67.000</span><span class="v b">41.000</span><span class="v c">67.000</span><span class="v d">64.091</span></div>
<div class="r"><svg class="i"><use href="#C"/></svg><span class="l">GPU Fan1</span><span class="v a">67.000</span><span class="v b">41.000</span><span class="v c">67.000</span><span class="v d">64.091</span></div>
<div class="r e"><svg class="i"><use href="#C"/></svg><span class="l">Performance Limit - Power</span><span class="v a">No</span><span class="v b">No</span><span class="v c">Yes</span><span class="v d">Yes</span></div>
<div class="r"><svg class="i"><use href="#C"/></svg><span class="l">Performance Limit - Thermal</span><span class="v a">No</span><span class="v b">No</span><span class="v c">No</span><span class="v d">No</span></div>
</div>
<div class="s" style="left:106.0px"></div><div class="sh" style="left:106.0px"></div>
<div class="s" style="left:156.0px"></div><div class="sh" style="left:156.0px"></div>
<div class="s" style="left:206.0px"></div><div class="sh" style="left:206.0px"></div>
<div class="s" style="left:256.0px"></div><div class="sh" style="left:256.0px"></div>
<div class="s" style="left:306.0px"></div><div class="sh" style="left:306.0px"></div>
</div>
<div class="tb"><svg style="left:1px;top:2px;width:8px;height:7.5px" viewBox="0 0 8 7.5"><rect x=".2" y=".2" width="7.4" height="7" rx=".7" fill="#1c2026"/><rect x="1.5" y=".2" width="4.4" height="2.5" fill="#5b9bd8"/><rect x="1.3" y="4" width="5" height="3.2" fill="#eef2f6"/><rect x="2" y="4.8" width="1.3" height="1.9" fill="#1c2026"/></svg><span class="tt">HWiNFO64 v6.00-3620 Sensor Status</span>
<svg style="left:1215px;top:0;width:60px;height:11px" viewBox="0 0 60 11" fill="none" stroke="#b5b5b5" stroke-width=".6"><path d="M4.5 5.2H9"/><rect x="27.2" y="3.9" width="3.3" height="3.3"/><path d="M28.2 3.9V2.9H31.5V6.2H30.5"/><path d="M50.5 3L55 7.5M55 3L50.5 7.5"/></svg></div>
<div class="ln" style="left:0;top:11px;width:1280px;height:1px"></div>
<div class="vd" style="left:319px"></div><div class="vd" style="left:639px"></div><div class="vd" style="left:959px"></div>
<div class="ln" style="left:0;top:11px;width:1px;height:663px;background:#b0b0b0"></div>
<div class="ln" style="left:1279px;top:11px;width:1px;height:663px;background:#b0b0b0"></div>
<!-- scrollbar pane 4 -->
<div style="left:1271.5px;top:12px;width:7.5px;height:661px;background:#f0f0f0"></div>
<div style="left:1271.5px;top:21px;width:7.5px;height:479px;background:#cdcdcd"></div>
<svg style="left:1271.5px;top:12px;width:7.5px;height:661px" viewBox="0 0 7.5 661" fill="none" stroke="#505050" stroke-width=".8"><path d="M2.1 5.8L3.8 4.1L5.5 5.8"/><path d="M2.1 655.6L3.8 657.3L5.5 655.6"/></svg>
<div class="ln" style="left:0;top:673px;width:1280px;height:1px;background:#a9a9a9"></div>
<div class="bar">
<div class="btn" style="left:1px;width:20.5px"></div><div class="btn" style="left:22.5px;width:21px"></div>
<svg style="left:1px;top:3px;width:43px;height:17.5px" viewBox="0 0 43 17.5" fill="#2f8fe0"><path d="M2.5 9.2L5.8 5.8999999999999995V7.6499999999999995H8.75V10.75H5.8V12.5Z"/><path d="M17.75 9.2L14.45 5.8999999999999995V7.6499999999999995H11.25V10.75H14.45V12.5Z"/><path d="M30.5 9.2L27.2 5.8999999999999995V7.6499999999999995H24.25V10.75H27.2V12.5Z"/><path d="M32 9.2L35.3 5.8999999999999995V7.6499999999999995H38.9V10.75H35.3V12.5Z"/></svg>
<div class="btn" style="left:1129.5px;width:21px"></div>
<div class="btn" style="left:1185px;width:20.8px"></div><div class="btn" style="left:1207.5px;width:21px"></div><div class="btn" style="left:1230.4px;width:21px"></div><div class="btn" style="left:1254px;width:20.8px"></div>
<span style="left:1163px;top:0;line-height:22.5px;font-size:5.75px;color:#222;-webkit-text-stroke:.1px">0:33:52</span>
<svg style="left:1129.5px;top:3px;width:21px;height:17.5px" viewBox="0 0 21 17.5"><rect x="8.5" y="5" width="5.5" height="4" fill="#dfe6ee" stroke="#9aa" stroke-width=".4"/><path d="M3 3.2L8.3 2.2L9.6 6.2L4.4 7.4Z" fill="#2f8fe0"/><path d="M3.6 8.2L10 6.8L10.3 7.8L4 9.2Z" fill="#9aa3ad"/><path d="M10.3 8.6L16.3 7.6L17.4 12L11.6 13.2Z" fill="#2f8fe0"/><path d="M11 14L17.6 12.7L17.9 13.7L11.4 15Z" fill="#9aa3ad"/></svg>
<svg style="left:1185px;top:3px;width:21px;height:17.5px" viewBox="0 0 21 17.5"><circle cx="10.4" cy="8.8" r="7.3" fill="#fff" stroke="#555" stroke-width=".9"/><path d="M10.4 3.6V8.9H13.4" fill="none" stroke="#222" stroke-width="1"/><path d="M10.4 2.2V3M10.4 14.6V15.4M3.8 8.8H4.6M16.2 8.8H17" stroke="#666" stroke-width=".5"/></svg>
<svg style="left:1207.5px;top:3px;width:21px;height:17.5px" viewBox="0 0 21 17.5"><rect x="5.5" y="2.5" width="9.5" height="12" fill="#f6f6f6" stroke="#cfcfcf" stroke-width=".5"/><path d="M12 2.5V14.5" stroke="#ddd" stroke-width=".5"/><path d="M14.8 10.3V15.3M12.3 12.8H17.3" stroke="#9acd32" stroke-width="2"/></svg>
<svg style="left:1230.4px;top:3px;width:21px;height:17.5px" viewBox="0 0 21 17.5"><circle cx="10.5" cy="8.8" r="5" fill="none" stroke="#aeb2b6" stroke-width="2.6" stroke-dasharray="2.6 1.3"/><circle cx="10.5" cy="8.8" r="3.6" fill="none" stroke="#c9ccd0" stroke-width="1.6"/></svg>
<svg style="left:1254px;top:3px;width:21px;height:17.5px" viewBox="0 0 21 17.5"><path d="M5.6 4L15.2 13.6M15.2 4L5.6 13.6" stroke="#2f9be6" stroke-width="3"/></svg>
</div>
<!-- Heaven window -->
<div class="hv"><div style="left:380px;top:12.5px;width:500px;height:36px;background:radial-gradient(ellipse at 50% 40%,#201d19 0,#181715 45%,#131313 75%)"></div>
<div class="hvt"><svg style="left:1.8px;top:2px;width:8px;height:8px" viewBox="0 0 8 8"><rect width="8" height="8" rx=".6" fill="#3a2a17"/><path d="M2 1.7H4.6V6.4M3.4 4H6.2M6.2 1.7V6.4" fill="none" stroke="#c9a063" stroke-width=".8"/></svg><span>Unigine Heaven Benchmark 4.0 Advanced (Direct3D11)</span>
<svg style="left:895px;top:0;width:64px;height:12.5px" viewBox="0 0 64 12.5" fill="none" stroke="#c4c4c4" stroke-width=".6"><path d="M5.3 6.2H10.5"/><rect x="27.3" y="4.1" width="3.9" height="3.9" stroke="#e6e6e6"/><path d="M51.2 3.8L56 8.6M56 3.8L51.2 8.6" stroke="#b8b8b8"/></svg></div>
<div class="hb" style="left:2.3px;width:46.2px">Benchmark</div><div class="hb" style="left:51.3px;width:35.8px">Camera</div><div class="hb dim" style="left:89.8px;width:50.2px">Environment</div><div class="hb dim" style="left:142.8px;width:48.2px">Tessellation</div>
<div class="hb" style="left:193.8px;width:35.6px">Settings</div><div class="hb" style="left:232.5px;width:31.9px">Quality</div><div class="hb" style="left:267.5px;width:30.6px">Sound</div><div class="hb" style="left:301px;width:23.4px">Quit</div>
<span class="fps b2" style="top:13.6px;line-height:10px;font-size:7.7px;letter-spacing:-.36px">FPS: 347</span>
<span class="fps b2" style="top:24.8px;line-height:10px;font-size:7.9px;letter-spacing:-.3px">TITAN RTX</span>
<span class="fps" style="top:34px;line-height:7px;font-size:5.55px;color:#c8c8c8">Graphics: 2100 MHz</span>
<span class="fps" style="top:41px;line-height:7px;font-size:5.55px;color:#c8c8c8">Memory: 7001 MHz</span>
</div>
<!-- taskbar -->
<div class="tk">
<div style="left:73.5px;top:0;width:24px;height:20px;background:#393c41"></div>
<div class="ul" style="left:73.5px;width:24px"></div><div class="ul" style="left:394px"></div><div class="ul" style="left:418.5px"></div><div class="ul" style="left:443px"></div><div class="ul" style="left:467.5px"></div>
<svg class="ti" style="left:6.0px;top:3.5px;width:12px;height:12px" viewBox="0 0 12 12"><path d="M1.9 3.2L5.4 2.7V5.8H1.9ZM5.9 2.6L10.1 2V5.8H5.9ZM1.9 6.3H5.4V9.4L1.9 8.9ZM5.9 6.3H10.1V10.1L5.9 9.5Z" fill="#fff"/></svg>
<svg class="ti" style="left:30.0px;top:3.5px;width:12px;height:12px" viewBox="0 0 12 12"><circle cx="7.1" cy="4.9" r="2.6" fill="none" stroke="#fff" stroke-width=".9"/><path d="M5.2 6.8L2.2 9.9" stroke="#fff" stroke-width="1"/></svg>
<svg class="ti" style="left:54.0px;top:3.5px;width:12px;height:12px" viewBox="0 0 12 12"><rect x="2.2" y="3.6" width="5.4" height="4.8" fill="none" stroke="#fff" stroke-width=".8"/><path d="M1.2 2.4V3.6M1.2 8.4V9.6M9.4 3V9M10.9 4.2V4.9M10.9 6V9" stroke="#fff" stroke-width=".8" fill="none"/><path d="M2.2 2.5H7.6M2.2 9.5H7.6" stroke="#fff" stroke-width=".6"/></svg>
<svg class="ti" style="left:78.5px;top:3.5px;width:13px;height:12px" viewBox="0 0 13 12"><ellipse cx="6" cy="6.3" rx="5.6" ry="4.7" fill="none" stroke="#fff" stroke-width="1"/><path d="M1.4 8.8L4.8 4.6L6.4 6.8L7.6 5.6L10.6 8.9Q6 11.8 1.4 8.8Z" fill="#fff"/><path d="M3 4.2Q5 2.6 6.6 3.4" stroke="#fff" stroke-width=".7" fill="none"/></svg>
<svg class="ti" style="left:104.0px;top:3.5px;width:12px;height:12px" viewBox="0 0 12 12"><path d="M1 2.2H4.6L5.6 3.2H11V10H1Z" fill="#f5c84c"/><path d="M1 4.4H11V10H1Z" fill="#fbdf7c"/><path d="M3.6 7.4H8.4V10H3.6Z" fill="#3f9ae0"/><path d="M4.6 8.4H7.4V10H4.6Z" fill="#fbdf7c"/></svg>
<svg class="ti" style="left:128.0px;top:3.5px;width:12px;height:12px" viewBox="0 0 12 12"><path d="M4.2 3.4V2.6A1.8 1.8 0 0 1 7.8 2.6V3.4" fill="none" stroke="#fff" stroke-width=".8"/><path d="M1.2 3.4H10.8V10.8H1.2Z" fill="#fff"/><rect x="3.4" y="4.8" width="2.2" height="2.2" fill="#f25022"/><rect x="6.2" y="4.8" width="2.2" height="2.2" fill="#7fba00"/><rect x="3.4" y="7.6" width="2.2" height="2.2" fill="#00a4ef"/><rect x="6.2" y="7.6" width="2.2" height="2.2" fill="#ffb900"/></svg>
<svg class="ti" style="left:153.0px;top:3.5px;width:12px;height:12px" viewBox="0 0 12 12"><path d="M.6 4.2L6 1.6L11.4 4.2V10.2H.6Z" fill="#fff"/><path d="M.6 4.6L8.6 8.2L11.4 5.2" fill="none" stroke="#0e1015" stroke-width=".9"/><path d="M6.6 7.4L8.8 10" stroke="#0e1015" stroke-width=".7"/></svg>
<svg class="ti" style="left:177.0px;top:3.5px;width:12px;height:12px" viewBox="0 0 12 12"><circle cx="6" cy="6" r="5.4" fill="#e33b2e"/><path d="M6 6L1.3 3.3A5.4 5.4 0 0 0 5.6 11.4L8 7.4Z" fill="#2da94f"/><path d="M6 6L8.4 7.4L5.6 11.4A5.4 5.4 0 0 0 11.1 4.2H6Z" fill="#fdd23f"/><circle cx="6" cy="6" r="2.5" fill="#fff"/><circle cx="6" cy="6" r="1.9" fill="#4a8af4"/></svg>
<svg class="ti" style="left:202.0px;top:3.5px;width:12px;height:12px" viewBox="0 0 12 12"><rect x="4.6" y="1.4" width="6.8" height="9.2" fill="#fff" stroke="#2b579a" stroke-width=".6"/><path d="M7.6 3.4H10.4M7.6 5H10.4M7.6 6.6H10.4M7.6 8.2H10.4" stroke="#2b579a" stroke-width=".6"/><path d="M.6 1.8L7 .6V11.4L.6 10.2Z" fill="#2b579a"/><text x="3.8" y="7.9" font-family="Liberation Sans,sans-serif" font-weight="bold" font-size="5" text-anchor="middle" fill="#fff">W</text></svg>
<svg class="ti" style="left:226.0px;top:3.5px;width:12px;height:12px" viewBox="0 0 12 12"><rect x=".9" y=".9" width="10.2" height="10.2" fill="#2a0a08" stroke="#d8261c" stroke-width=".9"/><path d="M2.6 8.8C4.6 7.6 5.8 5 5.6 3.2C5.4 2.2 4.6 2.6 4.9 3.8C5.4 5.6 7.2 7.4 9.2 7.4C10 7.2 9.4 6.6 8.2 6.8C6 7 4 7.8 2.6 8.8Z" fill="none" stroke="#fff" stroke-width=".7"/></svg>
<svg class="ti" style="left:250.5px;top:3.5px;width:12px;height:12px" viewBox="0 0 12 12"><rect x=".9" y=".9" width="10.2" height="10.2" fill="#1c1408" stroke="#e8a31c" stroke-width=".9"/><text x="6" y="8.2" font-family="Liberation Sans,sans-serif" font-weight="bold" font-size="6.2" text-anchor="middle" fill="#e8a31c">Br</text></svg>
<svg class="ti" style="left:275.0px;top:3.5px;width:12px;height:12px" viewBox="0 0 12 12"><rect x=".9" y=".9" width="10.2" height="10.2" fill="#1c1408" stroke="#2fb7e8" stroke-width=".9"/><text x="6" y="8.2" font-family="Liberation Sans,sans-serif" font-weight="bold" font-size="6.2" text-anchor="middle" fill="#2fb7e8">Ps</text></svg>
<svg class="ti" style="left:299.5px;top:3.5px;width:12px;height:12px" viewBox="0 0 12 12"><rect x=".9" y=".9" width="10.2" height="10.2" fill="#1c1408" stroke="#f18a1c" stroke-width=".9"/><text x="6" y="8.2" font-family="Liberation Sans,sans-serif" font-weight="bold" font-size="6.2" text-anchor="middle" fill="#f18a1c">Ai</text></svg>
<svg class="ti" style="left:324.0px;top:3.5px;width:12px;height:12px" viewBox="0 0 12 12"><rect x=".9" y=".9" width="10.2" height="10.2" fill="#1c1408" stroke="#ea4c89" stroke-width=".9"/><text x="6" y="8.2" font-family="Liberation Sans,sans-serif" font-weight="bold" font-size="6.2" text-anchor="middle" fill="#ea4c89">Id</text></svg>
<svg class="ti" style="left:349.0px;top:3.5px;width:12px;height:12px" viewBox="0 0 12 12"><rect x=".6" y=".6" width="10.8" height="10.8" fill="#fff"/><text x="6" y="9.9" font-family="Liberation Sans,sans-serif" font-weight="bold" font-size="10.5" text-anchor="middle" fill="#d22f2f">A</text></svg>
<svg class="ti" style="left:373.0px;top:3.5px;width:12px;height:12px" viewBox="0 0 12 12"><path d="M.8 1.2L3.6 1L4.8 5.2L6.4 3.4L8.6 6.4L11.2 5.6L9.6 9.2L5.4 11L3.4 8.2L1.6 6.4Z" fill="#fff"/><path d="M3.2 2.4L4.4 6.6L6.4 8.4" stroke="#0e1015" stroke-width=".5" fill="none"/><text x="9.2" y="4.2" font-family="Liberation Sans,sans-serif" font-size="4.4" text-anchor="middle" fill="#eee">6</text></svg>
<svg class="ti" style="left:398.0px;top:3.5px;width:12px;height:12px" viewBox="0 0 12 12"><rect x=".2" y=".2" width="11.6" height="11.6" fill="#16f016"/><text x="6.8" y="5.4" font-family="Liberation Sans,sans-serif" font-weight="bold" font-size="4.6" text-anchor="middle" fill="#1b5fd0">P</text><text x="5.9" y="9.9" font-family="Liberation Sans,sans-serif" font-weight="bold" font-size="4.6" text-anchor="middle" fill="#1b5fd0">2–1</text></svg>
<svg class="ti" style="left:422.5px;top:3.5px;width:12px;height:12px" viewBox="0 0 12 12"><path d="M1 4A2.6 2.6 0 0 1 3.6 1.4H8.4A2.6 2.6 0 0 1 11 4V5.6H1Z" fill="#2f86d6"/><rect x="2.6" y="5.2" width="6.8" height="5.6" fill="#fff"/><path d="M3.6 1.8V5.2M5 1.8V5.2M6.4 1.8V5.2M8.2 2.6V5.2" stroke="#fff" stroke-width=".7"/><path d="M4.6 6.4V10.6M7.2 6.4V10.6" stroke="#2f4a6a" stroke-width=".7"/></svg>
<svg class="ti" style="left:447.0px;top:3.5px;width:12px;height:12px" viewBox="0 0 12 12"><rect x=".8" y=".8" width="10.4" height="10.4" rx="1.2" fill="#5a3d1c"/><rect x="1.6" y="1.6" width="8.8" height="8.8" rx=".8" fill="#7a5728"/><path d="M3.2 3H6.2V9M4.6 6H8.6M8.6 3V9" fill="none" stroke="#e0bf86" stroke-width=".9"/></svg>
<svg class="ti" style="left:471.5px;top:3.5px;width:12px;height:12px" viewBox="0 0 12 12"><rect x=".8" y=".8" width="10.4" height="10.4" rx="1.2" fill="#5a3d1c"/><rect x="1.6" y="1.6" width="8.8" height="8.8" rx=".8" fill="#7a5728"/><path d="M3.2 3H6.2V9M4.6 6H8.6M8.6 3V9" fill="none" stroke="#e0bf86" stroke-width=".9"/></svg>
<span class="tx" style="left:1228.5px;top:1.5px;line-height:7px">19:51</span><span class="tx" style="left:1221px;top:10.5px;line-height:7px">24/01/2019</span>
<svg style="left:1180px;top:0;width:100px;height:20px" viewBox="0 0 100 20" fill="none" stroke="#fff" stroke-width=".7"><path d="M6.2 11.2L8.5 8.9L10.8 11.2"/><path d="M18 12.8L23.4 7.4V12.8Z" stroke="#bbb" stroke-width=".5"/><path d="M19.3 11.3A2.6 2.6 0 0 1 21.9 8.7M20.6 12.3A1.2 1.2 0 0 1 21.8 11.1" stroke="#ddd" stroke-width=".6"/><path d="M28.6 8.8H29.8L31.6 7.3V12.5L29.8 11H28.6Z" fill="#fff" stroke="none"/><path d="M32.8 8.4A2.2 2.2 0 0 1 32.8 11.4M34 7.3A4 4 0 0 1 34 12.5" stroke-width=".55"/><path d="M80.3 6.2H88.3V11.6H85.6L84.3 13.2V11.6H80.3Z" stroke-width=".7"/></svg>
</div>

</body></html>
